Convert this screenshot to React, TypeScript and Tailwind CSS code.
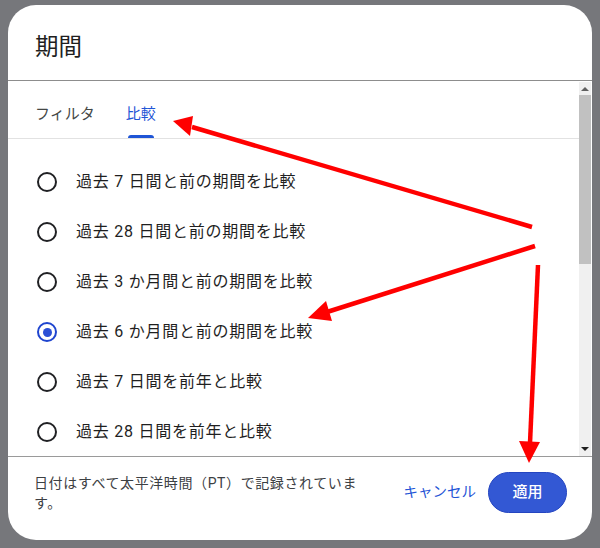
import React from "react";

const options = [
  "過去 7 日間と前の期間を比較",
  "過去 28 日間と前の期間を比較",
  "過去 3 か月間と前の期間を比較",
  "過去 6 か月間と前の期間を比較",
  "過去 7 日間を前年と比較",
  "過去 28 日間を前年と比較",
];

const selected = 3;

function Radio({ checked }: { checked: boolean }) {
  return (
    <span
      className={
        checked
          ? "flex h-[20px] w-[20px] shrink-0 items-center justify-center rounded-full border-2 border-[#1f45cf]"
          : "flex h-[20px] w-[20px] shrink-0 items-center justify-center rounded-full border-2 border-[#202124]"
      }
    >
      {checked && <span className="h-[9px] w-[9px] rounded-full bg-[#2b4fd6]" />}
    </span>
  );
}

function Arrows() {
  return (
    <svg
      className="pointer-events-none absolute left-0 top-0"
      width="600"
      height="548"
      viewBox="0 0 600 548"
    >
      <g stroke="#ff0000" strokeWidth="4.5" strokeLinecap="butt" fill="none">
        <line x1="532" y1="227" x2="192" y2="127" />
        <line x1="535" y1="246" x2="327" y2="312" />
        <line x1="538" y1="265" x2="530" y2="443" />
      </g>
      <g fill="#ff0000">
        <polygon points="173,121 193,116 190,136" />
        <polygon points="308,318 326,301 332,321" />
        <polygon points="529,463 519,441 540,442" />
      </g>
    </svg>
  );
}

export default function App() {
  return (
    <div className="relative h-[548px] w-[600px] overflow-hidden bg-[#76777b] pl-[8px] pt-[5px] font-['Roboto','Noto_Sans_CJK_JP',sans-serif]">
      <div className="flex h-[535px] w-[584px] flex-col overflow-hidden rounded-[28px] bg-white">
        <div className="flex h-[76px] shrink-0 items-center border-b-[1.5px] border-[#8d8d8d] pl-[27px] pt-[11px]">
          <h1 className="text-[23.5px] leading-none text-[#1f1f1f]">期間</h1>
        </div>

        <div className="flex min-h-0 flex-1">
          <div className="min-w-0 flex-1 overflow-hidden">
            <div className="flex h-[58px] gap-[31px] border-b border-[#e2e2e2] pl-[27px]">
              <button className="flex h-full items-center pt-[10px] text-[15px] text-[#444746]">
                フィルタ
              </button>
              <button className="relative flex h-full items-center pt-[10px] text-[15px] text-[#1f55d6]">
                比較
                <span className="absolute bottom-0 left-[2px] right-[2px] h-[3px] rounded-t-[3px] bg-[#1f55d6]" />
              </button>
            </div>

            <ul className="pt-[18px]">
              {options.map((label, i) => (
                <li key={label} className="flex h-[50px] items-center gap-[19px] pl-[29px]">
                  <Radio checked={i === selected} />
                  <span className="text-[16px] tracking-[0.75px] text-[#1f1f1f]">{label}</span>
                </li>
              ))}
            </ul>
          </div>

          <div className="mr-[1px] mt-[1px] flex w-[12px] flex-col bg-[#f0f0f0]">
            <div className="flex h-[13px] items-center justify-center">
              <span className="h-0 w-0 border-x-[4px] border-b-[4px] border-x-transparent border-b-[#606060]" />
            </div>
            <div className="h-[169px] bg-[#c1c1c1]" />
            <div className="flex-1" />
            <div className="flex h-[14px] items-center justify-center">
              <span className="h-0 w-0 border-x-[4px] border-t-[4px] border-x-transparent border-t-[#202020]" />
            </div>
          </div>
        </div>

        <div className="flex h-[84px] shrink-0 items-center border-t-[1.5px] border-[#9a9a9a] pb-[12px] pl-[26px] pr-[25px]">
          <p className="w-[335px] text-[14px] leading-[20px] tracking-[0.6px] text-[#3c4043]">
            日付はすべて太平洋時間（PT）で記録されています。
          </p>
          <div className="ml-auto flex items-center gap-[12px]">
            <button className="text-[14.5px] text-[#1f55d6]">キャンセル</button>
            <button className="h-[41px] w-[79px] rounded-full border border-[#2445c0] bg-[#3358d4] text-[15px] font-medium text-white">
              適用
            </button>
          </div>
        </div>
      </div>
      <Arrows />
    </div>
  );
}
